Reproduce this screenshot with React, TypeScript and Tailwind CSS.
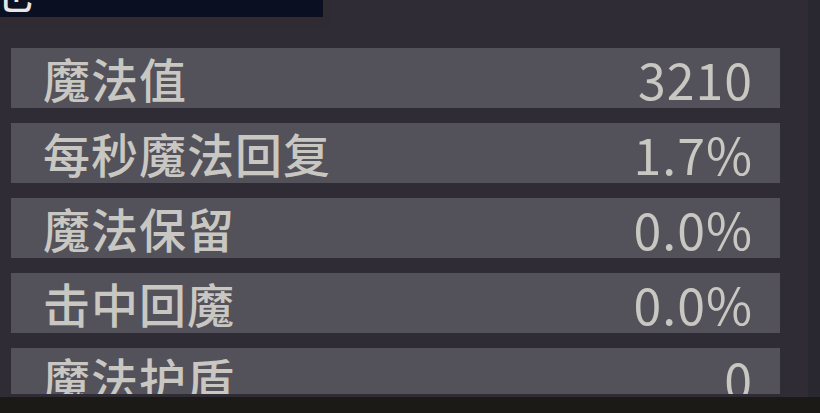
const rows = [
  { label: '魔法值', value: '3210' },
  { label: '每秒魔法回复', value: '1.7%' },
  { label: '魔法保留', value: '0.0%' },
  { label: '击中回魔', value: '0.0%' },
  { label: '魔法护盾', value: '0' },
];

const font = { fontFamily: '"Noto Sans CJK SC", "Noto Sans", sans-serif' };

export default function App() {
  return (
    <div
      className="flex h-[413px] w-[820px] flex-col overflow-hidden bg-[#2f2c35] text-[#c9c7c1]"
      style={font}
    >
      <div className="flex min-h-0 flex-1">
        <div className="flex min-w-0 flex-1 flex-col">
          <div className="h-[17px] w-[323px] shrink-0 overflow-hidden bg-[#0a0f22] shadow-[0_3px_6px_rgba(60,40,40,0.6)]">
            <div className="-ml-[15px] -mt-[37px] text-[48px] leading-[48px] text-[#e6e6e6]">池</div>
          </div>
          <div className="ml-[11px] mt-[31px] flex h-[346px] w-[769px] flex-col gap-[15px] overflow-hidden">
            {rows.map((r) => (
              <div
                key={r.label}
                className="flex h-[60px] shrink-0 items-center justify-between bg-[#53515a] pl-[32px] pr-[27px]"
              >
                <span className="-mt-[2px] text-[47px] font-medium leading-none tracking-[1px]">{r.label}</span>
                <span className="text-[50px] leading-none tracking-[1px]">{r.value}</span>
              </div>
            ))}
          </div>
        </div>
        <div className="w-[12px] shrink-0 bg-[#29272f]" />
      </div>
      <div className="h-[16px] shrink-0 bg-[#1b1a16]" />
    </div>
  );
}
